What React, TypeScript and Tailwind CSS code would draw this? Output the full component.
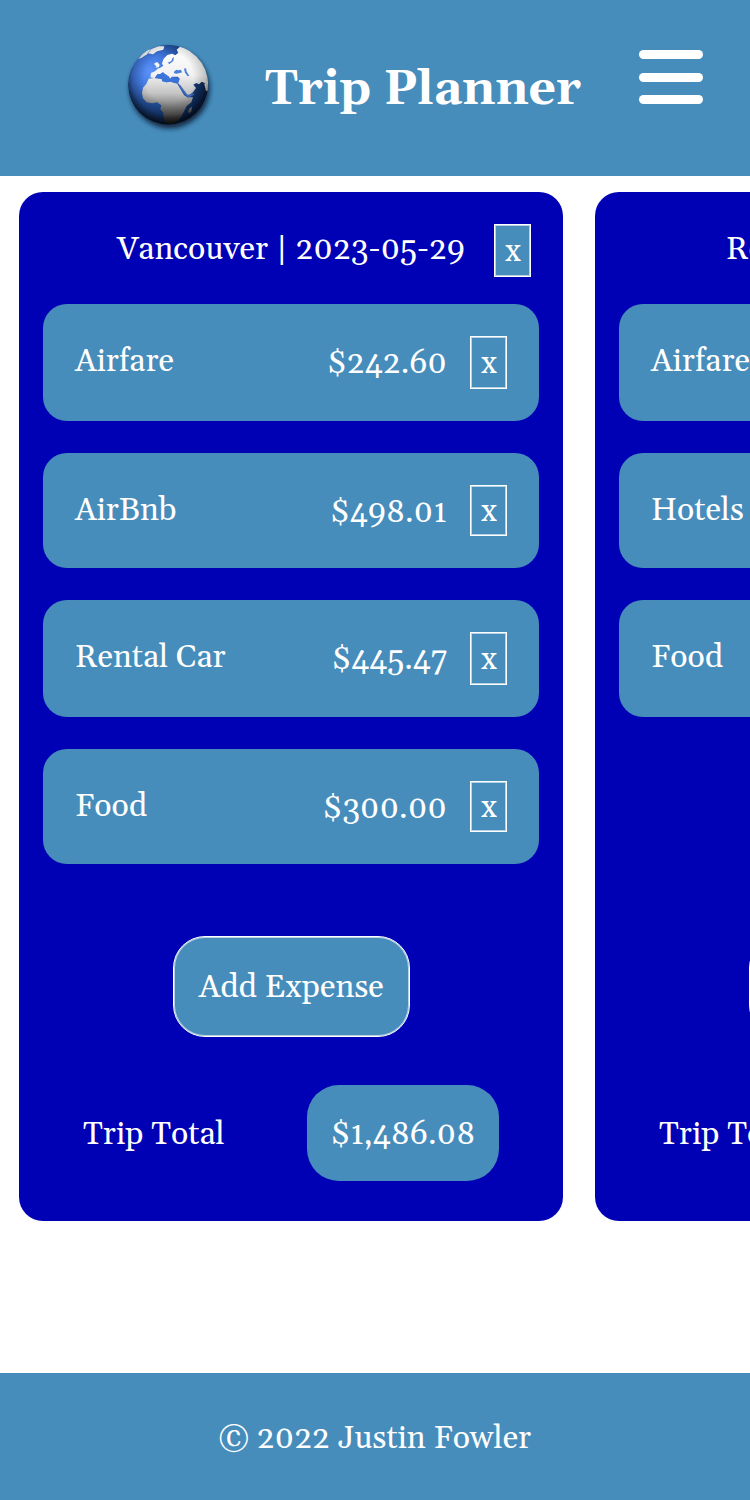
import React from "react";

type Expense = { name: string; amount: string };
type Trip = { title: string; titleClass: string; expenses: Expense[]; total: string };

const trips: Trip[] = [
  {
    title: "Vancouver | 2023-05-29",
    titleClass: "w-[349px] ml-[98px]",
    total: "$1,486.08",
    expenses: [
      { name: "Airfare", amount: "$242.60" },
      { name: "AirBnb", amount: "$498.01" },
      { name: "Rental Car", amount: "$445.47" },
      { name: "Food", amount: "$300.00" },
    ],
  },
  {
    title: "Rome | 2023-09-12",
    titleClass: "w-[316px] ml-[131px]",
    total: "$2,150.00",
    expenses: [
      { name: "Airfare", amount: "$950.00" },
      { name: "Hotels", amount: "$800.00" },
      { name: "Food", amount: "$400.00" },
    ],
  },
];

function Globe() {
  return (
    <svg viewBox="0 0 330 315" className="h-[105px] w-[110px] shrink-0" aria-hidden="true">
      <defs>
        <radialGradient id="ocean" cx="108" cy="110" r="175" gradientUnits="userSpaceOnUse">
          <stop offset="0" stopColor="#5b93fb" />
          <stop offset="0.28" stopColor="#427ae2" />
          <stop offset="0.55" stopColor="#24529f" />
          <stop offset="1" stopColor="#0a2149" />
        </radialGradient>
        <linearGradient id="land" x1="0" y1="35" x2="0" y2="268" gradientUnits="userSpaceOnUse">
          <stop offset="0" stopColor="#ffffff" />
          <stop offset="0.36" stopColor="#f2f2f2" />
          <stop offset="0.6" stopColor="#c4c4c4" />
          <stop offset="0.8" stopColor="#747474" />
          <stop offset="1" stopColor="#282828" />
        </linearGradient>
        <radialGradient id="shade" cx="162" cy="128" r="146" gradientUnits="userSpaceOnUse">
          <stop offset="0.5" stopColor="#000" stopOpacity="0" />
          <stop offset="0.76" stopColor="#000" stopOpacity="0.2" />
          <stop offset="1" stopColor="#000" stopOpacity="0.85" />
        </radialGradient>
        <clipPath id="disc"><circle cx="159" cy="149" r="120" /></clipPath>
        <filter id="soft" x="-20%" y="-20%" width="140%" height="140%"><feGaussianBlur stdDeviation="8" /></filter>
      </defs>
      <circle cx="164" cy="160" r="120" fill="#071729" opacity="0.85" filter="url(#soft)" />
      <g clipPath="url(#disc)">
        <circle cx="159" cy="149" r="120" fill="url(#ocean)" />
        <g fill="url(#land)">
          <path d="M99 55L109 42L130 34L148 34L145 44L126 49L114 58Z" />
          <path d="M70 72L84 55L99 43L107 43L96 58L80 68Z" />
          <path d="M143 79L146 71L157 60L171 56L181 61L190 53L185 44L195 35L279 60L281 150L270 145L260 140L252 148L244 144L235 149L243 159L234 172L221 182L211 175L199 158L192 147L187 144L194 131L188 125L171 125L165 132L161 124L151 117L144 112L136 117L127 118L119 130L106 127L108 114L120 109L128 101L136 98L145 92L141 86Z" />
          <path d="M118 85l9-4 7 8-2 7-10 2 2-6-5-2z" />
          <path d="M101 131L124 128L140 132L142 139L154 142L166 140L187 146L195 160L207 180L217 187L234 187L229 202L215 213L207 229L198 247L184 262L168 268L153 265L146 249L144 232L136 223L139 211L126 202L111 205L95 202L84 190L81 174L84 158L94 147Z" />
          <path d="M224 220l7-5-2 14-7 7-2-7z" />
          <path d="M268 147L280 137V165L273 169Z" />
        </g>
        <path d="M158 83l5 4 12-9 2-12-5 4-3 8zM177 110l7-6 5 2 8-2 5 8-16 4-9-1zM207 101l6-1 2 10 8 12-5 2-8-11z" fill="#4a80dc" />
        <path d="M119 130L127 118L136 117L144 112L149 121L158 132L161 124L165 132L171 127L194 131L190 145L166 140L154 142L142 139L140 132Z" fill="#3b73d9" />
        <path d="M190 151l5-2 23 31 18-5 2 4-19 9-10-10z" fill="#3e6bbd" />
        <circle cx="159" cy="149" r="120" fill="url(#shade)" />
      </g>
    </svg>
  );
}

function CloseButton({ className }: { className: string }) {
  return (
    <button className={`flex w-[37px] shrink-0 items-center justify-center border border-white pt-[3px] pl-px text-[32px] leading-none text-white shadow-[inset_0_0_0_1px_rgba(255,255,255,0.6)] ${className}`}>
      x
    </button>
  );
}

function TripCard({ trip }: { trip: Trip }) {
  return (
    <section className="flex h-[1028.5px] w-[544px] shrink-0 flex-col rounded-[24px] bg-[#0000b5]">
      <div className="flex h-[112px] shrink-0 items-start pt-[32px] pr-[32px]">
        <h2 className={`shrink-0 pt-[6px] leading-[40px] ${trip.titleClass}`}>{trip.title}</h2>
        <CloseButton className="ml-[28px] h-[53px] bg-[#468dbc]" />
      </div>
      <ul className="flex h-[560px] shrink-0 flex-col gap-[32px] px-[24px]">
        {trip.expenses.map((e) => (
          <li key={e.name} className="group flex shrink-0 items-start rounded-[24px] bg-[#468dbc] px-[32px] pt-[32px] odd:h-[117px] even:h-[115px]">
            <span className="pt-[6px] leading-[40px]">{e.name}</span>
            <span className="mr-[23px] ml-auto pt-[8px] leading-[40px]">{e.amount}</span>
            <CloseButton className="group-odd:h-[53px] group-even:h-[51px]" />
          </li>
        ))}
      </ul>
      <button className="mt-[72px] ml-[154px] flex h-[101px] w-[236.5px] shrink-0 items-center justify-center rounded-[32px] border border-white bg-[#468dbc] pt-[2px] shadow-[inset_0_0_0_1px_rgba(255,255,255,0.6)]">
        Add Expense
      </button>
      <div className="mt-[48px] flex h-[96px] shrink-0 items-center pl-[64px]">
        <span className="w-[224px] pt-[4px]">Trip Total</span>
        <span className="flex h-[96px] w-[192px] items-center justify-center rounded-[32px] bg-[#468dbc] pt-[4px]">{trip.total}</span>
      </div>
    </section>
  );
}

export default function App() {
  return (
    <div className="flex h-[1500px] w-[750px] flex-col overflow-hidden bg-white font-[Georgia,Gelasio,'Liberation_Serif',serif] text-[32px] leading-[40px] whitespace-nowrap text-white">
      <header className="flex h-[176px] shrink-0 items-start bg-[#468dbc] pl-[115px]">
        <div className="pt-[35px]"><Globe /></div>
        <h1 className="ml-[40px] w-[374px] shrink-0 pt-[60px] text-[48px] leading-[60px] font-bold">Trip Planner</h1>
        <button aria-label="Menu" className="mt-[50px] flex shrink-0 flex-col gap-[13.5px]">
          <span className="h-[9px] w-[64px] rounded-full bg-white" />
          <span className="h-[9px] w-[64px] rounded-full bg-white" />
          <span className="h-[9px] w-[64px] rounded-full bg-white" />
        </button>
      </header>
      <main className="flex h-[1196.5px] shrink-0 gap-[32px] overflow-hidden pt-[16px] pl-[19px]">
        {trips.map((t) => <TripCard key={t.title} trip={t} />)}
      </main>
      <footer className="flex flex-1 items-center justify-center bg-[#468dbc] pt-[6px]">© 2022 Justin Fowler</footer>
    </div>
  );
}
